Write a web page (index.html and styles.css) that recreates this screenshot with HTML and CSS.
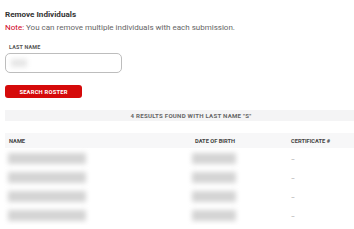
FILE: index.html
```html
<!DOCTYPE html>
<html lang="en">

<head>
    <meta charset="UTF-8">
    <meta name="viewport" content="width=device-width, initial-scale=1.0">
    <title>Remove Individuals</title>
    <link rel="stylesheet" href="styles.css">
</head>

<body>
    <div class="page">
        <h2 class="title">Remove Individuals</h2>
        <p class="note"><span class="note_label">Note:</span> You can remove multiple individuals with each submission.</p>

        <div class="field">
            <label class="field_label">LAST NAME</label>
            <div class="field_input">
                <span class="blur blur_input"></span>
            </div>
        </div>

        <button class="search_btn">SEARCH ROSTER</button>

        <div class="results_bar">4 RESULTS FOUND WITH LAST NAME "S"</div>

        <div class="roster">
            <div class="roster_row roster_head">
                <div class="cell">NAME</div>
                <div class="cell">DATE OF BIRTH</div>
                <div class="cell">CERTIFICATE #</div>
            </div>
            <div class="roster_row">
                <div class="cell"><span class="blur blur_name"></span></div>
                <div class="cell"><span class="blur blur_dob"></span></div>
                <div class="cell dash">&ndash;</div>
            </div>
            <div class="roster_row">
                <div class="cell"><span class="blur blur_name"></span></div>
                <div class="cell"><span class="blur blur_dob"></span></div>
                <div class="cell dash">&ndash;</div>
            </div>
            <div class="roster_row">
                <div class="cell"><span class="blur blur_name"></span></div>
                <div class="cell"><span class="blur blur_dob"></span></div>
                <div class="cell dash">&ndash;</div>
            </div>
            <div class="roster_row">
                <div class="cell"><span class="blur blur_name"></span></div>
                <div class="cell"><span class="blur blur_dob"></span></div>
                <div class="cell dash">&ndash;</div>
            </div>
        </div>
    </div>
</body>

</html>
```

FILE: styles.css
```css
/* base */
body {
    font-family: Roboto, "Liberation Sans", Arial, sans-serif;
    margin: 0;
    padding: 0;
    overflow: hidden;
    background: #fff;
}

.page {
    width: 372px;
    padding: 9px 5px 0;
}

.title {
    margin: 0;
    font-size: 8.1px;
    line-height: 10px;
    font-weight: 700;
    color: #333;
}

.note {
    margin: 3px 0 0;
    font-size: 8px;
    line-height: 11px;
    color: #666;
}

.note_label {
    color: #d0021b;
}

.field {
    margin-top: 11px;
}

.field_label {
    display: block;
    font-size: 5.4px;
    line-height: 6px;
    font-weight: 700;
    letter-spacing: 0.2px;
    color: #555;
    padding-left: 4px;
}

.field_input {
    width: 110px;
    height: 18px;
    margin-top: 3px;
    border: 1px solid #bdbdbd;
    border-radius: 5px;
    display: flex;
    align-items: center;
    padding-left: 5px;
}

.search_btn {
    display: block;
    margin-top: 12px;
    width: 77px;
    height: 13px;
    border: none;
    border-radius: 3px;
    background: #d50a0a;
    color: #fff;
    font-family: inherit;
    font-size: 5.8px;
    font-weight: 700;
    letter-spacing: 0.2px;
    padding: 0;
}

.results_bar {
    margin-top: 12px;
    height: 11px;
    line-height: 11px;
    background: #f4f4f5;
    text-align: center;
    font-size: 6.1px;
    font-weight: 700;
    letter-spacing: 0.25px;
    color: #666;
}

.roster {
    margin-top: 12px;
}

.roster_row {
    display: grid;
    grid-template-columns: 186px 96px 1fr;
    height: 19px;
    align-items: center;
}

.roster_head {
    height: 15px;
    background: #f7f7f8;
    font-size: 5.7px;
    font-weight: 700;
    color: #444;
    margin-bottom: 1px;
}

.roster_head .cell {
    padding-left: 4px;
}

.dash {
    padding-left: 4px;
    font-size: 6px;
    color: #888;
}

/* blurred personal data */
.blur {
    display: block;
    background: #d4d4d4;
    filter: blur(2.5px);
}

.blur_input {
    width: 16px;
    height: 8px;
    background: #e6e6e6;
}

.blur_name {
    width: 78px;
    height: 11px;
    margin-left: 3px;
}

.blur_dob {
    width: 44px;
    height: 11px;
    margin-left: 1px;
}
```
